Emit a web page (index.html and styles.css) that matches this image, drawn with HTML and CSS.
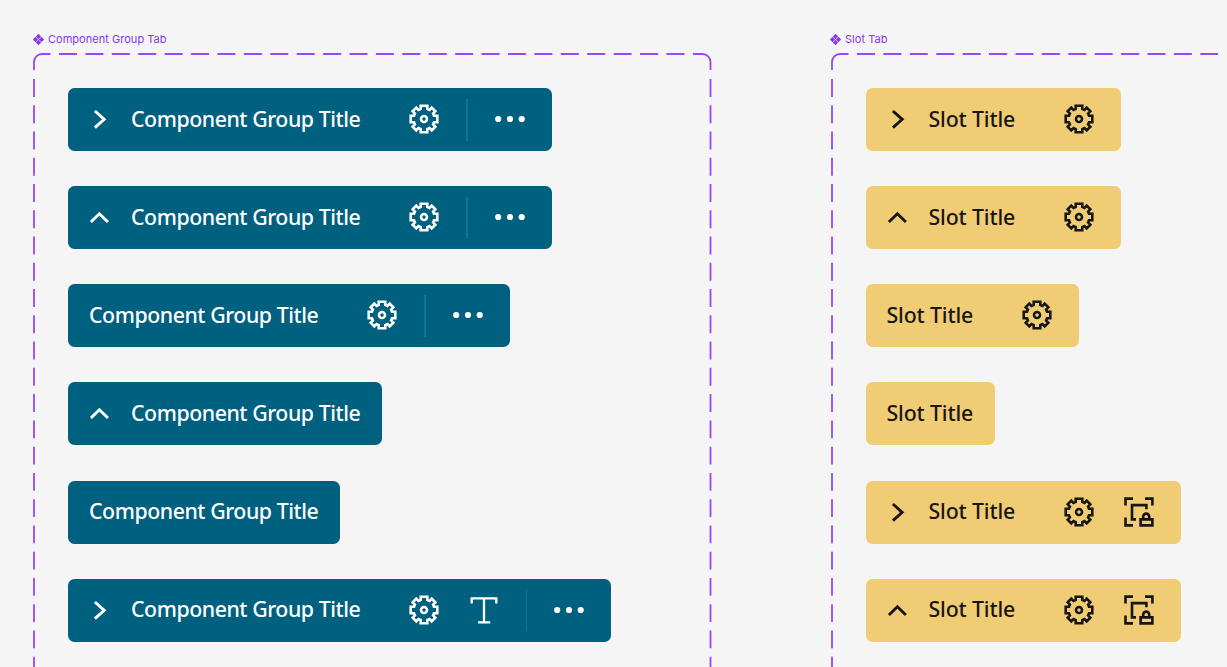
FILE: index.html
```html
<!DOCTYPE html>
<html lang="en">
<head>
    <meta charset="UTF-8">
    <meta name="viewport" content="width=device-width, initial-scale=1.0">
    <title>Tabs</title>
    <link rel="stylesheet" href="styles.css">
</head>
<body>
    <!-- shared icons -->
    <svg class="symbols" width="0" height="0">
        <symbol id="component" viewBox="0 0 11 11">
            <path d="M5.5 0L8 2.5L5.5 5L3 2.5ZM5.5 6L8 8.5L5.5 11L3 8.5ZM0 5.5L2.5 3L5 5.5L2.5 8ZM6 5.5L8.5 3L11 5.5L8.5 8Z" fill="currentColor" stroke="currentColor" stroke-width="0.3"/>
        </symbol>
        <symbol id="right" viewBox="0 0 21 21">
            <path d="M5.9 2L15.2 10.3L5.9 18.6"/>
        </symbol>
        <symbol id="up" viewBox="0 0 21 21">
            <path d="M1.9 15L10.4 6.7L18.9 15"/>
        </symbol>
        <symbol id="gear" viewBox="-15 -15 30 30">
            <path d="M-3.3 -10V-13.3H3.3V-10L5.5 -9.1L7.7 -11.3L11.3 -7.7L9.1 -5.5L10 -3.3H13.3V3.3H10L9.1 5.5L11.3 7.7L7.7 11.3L5.5 9.1L3.3 10V13.3H-3.3V10L-5.5 9.1L-7.7 11.3L-11.3 7.7L-9.1 5.5L-10 3.3H-13.3V-3.3H-10L-9.1 -5.5L-11.3 -7.7L-7.7 -11.3L-5.5 -9.1Z"/>
            <circle cx="0" cy="0" r="3"/>
        </symbol>
        <symbol id="text" viewBox="0 0 30 30">
            <path d="M2.7 8.4V3.4H27.3V8.4M15 3.4V27.3M9 27.3H21.3"/>
        </symbol>
        <symbol id="lock" viewBox="0 0 30 30">
            <path d="M1.5 8.6V1.6H9M21 1.6H28.4V8.6M1.5 20.6V28.4H9M12 22.4H8V8.1H22.4V12.2"/>
            <path d="M16.6 22.4H28.4V28.4H16.6ZM19.2 22V19.6A3 3 0 0 1 25.2 19.6V22"/>
        </symbol>
        <symbol id="dots" viewBox="0 0 30 30">
            <g fill="currentColor" stroke="none">
                <circle cx="3.2" cy="15" r="3.1"/>
                <circle cx="15" cy="15" r="3.1"/>
                <circle cx="26.7" cy="15" r="3.1"/>
            </g>
        </symbol>
    </svg>

    <div class="board">
        <div class="set group-set">
            <div class="label"><svg class="label-icon"><use href="#component"/></svg>Component Group Tab</div>
            <div class="frame">
                <svg class="outline">
                    <path d="M1 17V9A8 8 0 0 1 9 1H17.5M660 1H669.5A8 8 0 0 1 677.5 9V17"/>
                    <path class="dash-x" d="M26 1H652"/>
                    <path class="dash-y" d="M1 26V640M677.5 26V640"/>
                </svg>
                <div class="tabs">
                    <div class="tab">
                        <svg class="chevron"><use href="#right"/></svg>
                        <span class="title">Component Group Title</span>
                        <svg class="icon"><use href="#gear"/></svg>
                        <span class="divider"></span>
                        <svg class="icon"><use href="#dots"/></svg>
                    </div>
                    <div class="tab">
                        <svg class="chevron"><use href="#up"/></svg>
                        <span class="title">Component Group Title</span>
                        <svg class="icon"><use href="#gear"/></svg>
                        <span class="divider"></span>
                        <svg class="icon"><use href="#dots"/></svg>
                    </div>
                    <div class="tab">
                        <span class="title">Component Group Title</span>
                        <svg class="icon"><use href="#gear"/></svg>
                        <span class="divider"></span>
                        <svg class="icon"><use href="#dots"/></svg>
                    </div>
                    <div class="tab">
                        <svg class="chevron"><use href="#up"/></svg>
                        <span class="title">Component Group Title</span>
                    </div>
                    <div class="tab">
                        <span class="title">Component Group Title</span>
                    </div>
                    <div class="tab">
                        <svg class="chevron"><use href="#right"/></svg>
                        <span class="title">Component Group Title</span>
                        <svg class="icon"><use href="#gear"/></svg>
                        <svg class="icon thin"><use href="#text"/></svg>
                        <span class="divider"></span>
                        <svg class="icon"><use href="#dots"/></svg>
                    </div>
                </div>
            </div>
        </div>

        <div class="set slot-set">
            <div class="label"><svg class="label-icon"><use href="#component"/></svg>Slot Tab</div>
            <div class="frame">
                <svg class="outline">
                    <path d="M1 17V9A8 8 0 0 1 9 1H17.5"/>
                    <path class="dash-x" d="M26 1H387"/>
                    <path class="dash-y" d="M1 26V640"/>
                </svg>
                <div class="tabs">
                    <div class="tab">
                        <svg class="chevron"><use href="#right"/></svg>
                        <span class="title">Slot Title</span>
                        <svg class="icon"><use href="#gear"/></svg>
                    </div>
                    <div class="tab">
                        <svg class="chevron"><use href="#up"/></svg>
                        <span class="title">Slot Title</span>
                        <svg class="icon"><use href="#gear"/></svg>
                    </div>
                    <div class="tab">
                        <span class="title">Slot Title</span>
                        <svg class="icon"><use href="#gear"/></svg>
                    </div>
                    <div class="tab">
                        <span class="title">Slot Title</span>
                    </div>
                    <div class="tab">
                        <svg class="chevron"><use href="#right"/></svg>
                        <span class="title">Slot Title</span>
                        <svg class="icon"><use href="#gear"/></svg>
                        <svg class="icon"><use href="#lock"/></svg>
                    </div>
                    <div class="tab">
                        <svg class="chevron"><use href="#up"/></svg>
                        <span class="title">Slot Title</span>
                        <svg class="icon"><use href="#gear"/></svg>
                        <svg class="icon"><use href="#lock"/></svg>
                    </div>
                </div>
            </div>
        </div>
    </div>
</body>
</html>
```
FILE: styles.css
```css
body {
    margin: 0;
    background: #f5f5f5;
    overflow: hidden;
}
.symbols {
    display: block;
}
.board {
    display: flex;
    gap: 119px;
    height: 667px;
    padding-left: 33px;
    box-sizing: border-box;
    overflow: hidden;
}
.set {
    flex-shrink: 0;
    padding-top: 32px;
}
.group-set {
    width: 678.5px;
}
.slot-set {
    width: 420px;
}
.label {
    display: flex;
    align-items: center;
    gap: 4px;
    height: 14px;
    margin-bottom: 7px;
    font-family: Inter, sans-serif;
    font-size: 11px;
    letter-spacing: 0.03px;
    color: #8638e5;
}
.slot-set .label {
    margin-left: -0.5px;
}
.label-icon {
    width: 11px;
    height: 11px;
}
.frame {
    display: grid;
    height: 640px;
}
.outline,
.tabs {
    grid-area: 1 / 1;
}
.outline {
    width: 100%;
    height: 100%;
    fill: none;
    stroke: #9747ff;
    stroke-width: 1.8;
}
.dash-x {
    stroke-dasharray: 18 8.41;
}
.dash-y {
    stroke-dasharray: 17.9 8.36;
}
.tabs {
    display: flex;
    flex-direction: column;
    align-items: flex-start;
    gap: 35.15px;
    padding: 35px;
}
.tab {
    display: flex;
    align-items: center;
    height: 63px;
    box-sizing: border-box;
    padding: 0 21px;
    border-radius: 6.5px;
    background: #00607f;
    color: #fff;
}
.slot-set .tab {
    background: #f0cc74;
    color: #161616;
}
.chevron,
.icon {
    flex-shrink: 0;
    fill: none;
    stroke: currentColor;
    stroke-width: 2.6;
}
.chevron {
    width: 21px;
    height: 21px;
    margin-right: 21px;
    stroke-width: 2.9;
}
.icon {
    width: 30px;
    height: 30px;
    margin-bottom: 0.6px;
}
.thin {
    stroke-width: 2.3;
}
.title {
    width: 230px;
    margin-bottom: 1.6px;
    font-family: "Noto Sans", sans-serif;
    font-size: 21.3px;
    font-weight: 500;
    line-height: 30px;
    letter-spacing: -0.44px;
    white-space: nowrap;
}
.slot-set .title {
    width: 87.5px;
    letter-spacing: -0.14px;
}
.title + .icon {
    margin-left: 48px;
}
.icon + .icon {
    margin-left: 29.5px;
}
.divider {
    width: 1.5px;
    height: 42px;
    margin: 0 27px;
    background: #1a6f8b;
}
.icon:last-child {
    margin-right: 6px;
}
```
